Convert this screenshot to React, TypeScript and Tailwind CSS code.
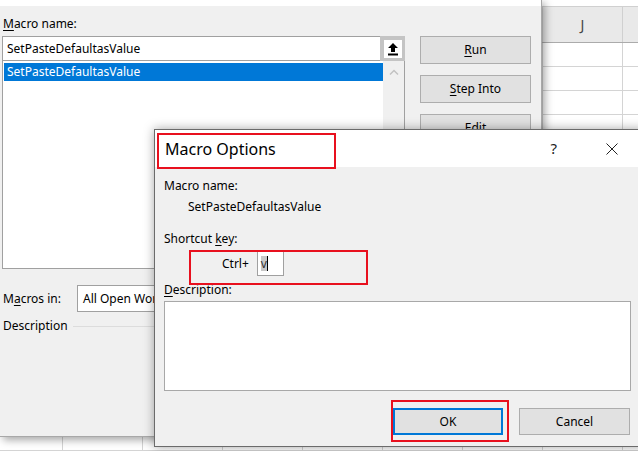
import React from "react"

const cols = ["C", "D", "E", "F", "G", "H", "I", "J", ""]
const colWidths = [63, 80, 80, 80, 80, 80, 80, 80, 80]

function Mn({ children }: { children: React.ReactNode }) {
  // mnemonic letter (underlined accelerator)
  return <span className="underline underline-offset-2 decoration-1">{children}</span>
}

function WinButton({
  children,
  className = "",
  focused = false,
}: {
  children: React.ReactNode
  className?: string
  focused?: boolean
}) {
  return (
    <div
      className={`flex items-center justify-center bg-[#e1e1e1] text-[12px] text-black ${
        focused ? "border-2 border-[#0078d7]" : "border border-[#adadad]"
      } ${className}`}
    >
      {children}
    </div>
  )
}

function UploadIcon() {
  return (
    <svg width="12" height="14" viewBox="0 0 12 14">
      <path d="M6 1 L11 6 H8 V10 H4 V6 H1 Z" fill="#000" />
      <rect x="1" y="11.5" width="10" height="2" fill="#000" />
    </svg>
  )
}

function Sheet() {
  return (
    <div className="flex flex-col w-full h-full bg-white">
      <div className="h-[7px] bg-white border-b border-[#d0d0d0]" />
      {/* column headers */}
      <div className="flex h-[36px] bg-[#e9e9e9] border-b border-[#ababab]">
        {cols.map((c, i) => (
          <div
            key={i}
            style={{ width: colWidths[i] }}
            className="shrink-0 flex items-center justify-center border-r border-[#d0d0d0] text-[14px] text-[#444]"
          >
            {c}
          </div>
        ))}
      </div>
      {/* rows */}
      {Array.from({ length: 17 }, (_, r) => (
        <div key={r} className="flex h-[24px] shrink-0 border-b border-[#d4d4d4]">
          {cols.map((c, i) => (
            <div key={i} style={{ width: colWidths[i] }} className="shrink-0 border-r border-[#d4d4d4]" />
          ))}
        </div>
      ))}
    </div>
  )
}

function MacroDialog() {
  return (
    <div className="absolute left-0 top-0 w-[542px] h-[437px] bg-[#f0f0f0] border-r border-b border-[#a8a8a8] shadow-[3px_3px_8px_rgba(0,0,0,0.35)] flex flex-col">
      <div className="h-[6px] bg-white shrink-0" />
      <div className="flex gap-[15px] pl-[2px]">
        {/* left column */}
        <div className="flex flex-col w-[403px]">
          <div className="mt-[10px] pl-[1px] leading-[16px] text-[12px]">
            <Mn>M</Mn>acro name:
          </div>
          <div className="mt-[4px] flex h-[25px]">
            <div className="flex-1 bg-white border border-[#a0a0a0] border-r-0 flex items-center pl-[4px] text-[12px]">
              SetPasteDefaultasValue
            </div>
            <div className="w-[25px] bg-[#c4c4c4] flex items-center justify-center">
              <div className="w-[18px] h-[18px] bg-white flex items-center justify-center">
                <UploadIcon />
              </div>
            </div>
          </div>
          <div className="flex h-[208px] bg-white border border-[#a0a0a0] border-t-0">
            <div className="flex-1 pt-[2px] pl-[1px]">
              <div className="h-[18px] bg-[#0078d7] text-white text-[12px] leading-[18px] pl-[3px]">
                SetPasteDefaultasValue
              </div>
            </div>
            <div className="w-[21px] bg-[#f0f0f0] flex justify-center pt-[8px]">
              <svg width="10" height="6" viewBox="0 0 10 6">
                <path d="M1 5.5 L5 1.5 L9 5.5" stroke="#c2c2c2" strokeWidth="1.5" fill="none" />
              </svg>
            </div>
          </div>
          <div className="mt-[16px] flex items-center">
            <div className="w-[75px] pl-[1px] text-[12px]">
              M<Mn>a</Mn>cros in:
            </div>
            <div className="flex-1 h-[27px] bg-white border border-[#a0a0a0] flex items-center pl-[5px] text-[12px]">
              All Open Workbooks
            </div>
          </div>
          <div className="mt-[6px] flex items-center gap-[5px]">
            <div className="pl-[1px] text-[12px] leading-[16px]">Description</div>
            <div className="flex-1 h-px bg-[#dcdcdc]" />
          </div>
        </div>
        {/* right buttons */}
        <div className="flex flex-col gap-[11px] mt-[30px] w-[111px]">
          <WinButton className="h-[28px]">
            <Mn>R</Mn>un
          </WinButton>
          <WinButton className="h-[28px]">
            <Mn>S</Mn>tep Into
          </WinButton>
          <WinButton className="h-[28px]">
            <Mn>E</Mn>dit
          </WinButton>
        </div>
      </div>
    </div>
  )
}

function OptionsDialog() {
  return (
    <div className="absolute left-[154px] top-[129px] w-[492px] h-[318px] bg-[#f0f0f0] border border-[#6b6b6b] shadow-[0_0_10px_rgba(0,0,0,0.35)] flex flex-col">
      {/* title bar */}
      <div className="h-[37px] bg-white flex items-center shrink-0">
        <div className="pl-[10px] text-[16px] text-black">Macro Options</div>
        <div className="ml-auto mr-[49px] text-[15px] text-[#222]">?</div>
        <svg className="mr-[27px]" width="12" height="12" viewBox="0 0 12 12">
          <path d="M0.5 0.5 L11.5 11.5 M11.5 0.5 L0.5 11.5" stroke="#222" strokeWidth="1" />
        </svg>
      </div>
      {/* body */}
      <div className="flex flex-col pl-[9px] pt-[11px] text-[12px] text-black">
        <div className="leading-[16px]">Macro name:</div>
        <div className="mt-[5px] pl-[24px] leading-[16px]">SetPasteDefaultasValue</div>
        <div className="mt-[16px] leading-[16px]">
          Shortcut <Mn>k</Mn>ey:
        </div>
        <div className="mt-[4px] flex items-center pl-[58px] gap-[8px]">
          <span>Ctrl+</span>
          <div className="w-[27px] h-[25px] bg-white border border-[#a0a0a0] flex items-center pl-[3px]">
            <span className="bg-[#c8c8c8] leading-[15px] text-[#333]">v</span>
            <span className="w-px h-[15px] bg-black" />
          </div>
        </div>
        <div className="mt-[6px] leading-[16px]">
          <Mn>D</Mn>escription:
        </div>
        <div className="mt-[3px] w-[467px] h-[90px] bg-white border border-[#a8a8a8]" />
        <div className="mt-[17px] flex gap-[16px] pl-[229px]">
          <WinButton focused className="w-[110px] h-[27px]">
            OK
          </WinButton>
          <WinButton className="w-[111px] h-[27px]">Cancel</WinButton>
        </div>
      </div>
      {/* red annotation boxes */}
      <div className="absolute left-[2px] top-[3px] w-[179px] h-[36px] border-2 border-[#e8101e]" />
      <div className="absolute left-[34px] top-[120px] w-[179px] h-[35px] border-2 border-[#e8101e]" />
      <div className="absolute left-[236px] top-[270px] w-[118px] h-[42px] border-2 border-[#e8101e]" />
    </div>
  )
}

export default function App() {
  return (
    <div
      className="relative w-[638px] h-[451px] overflow-hidden bg-white text-black"
      style={{ fontFamily: '"Noto Sans", "Open Sans", sans-serif' }}
    >
      <Sheet />
      <MacroDialog />
      <OptionsDialog />
    </div>
  )
}
